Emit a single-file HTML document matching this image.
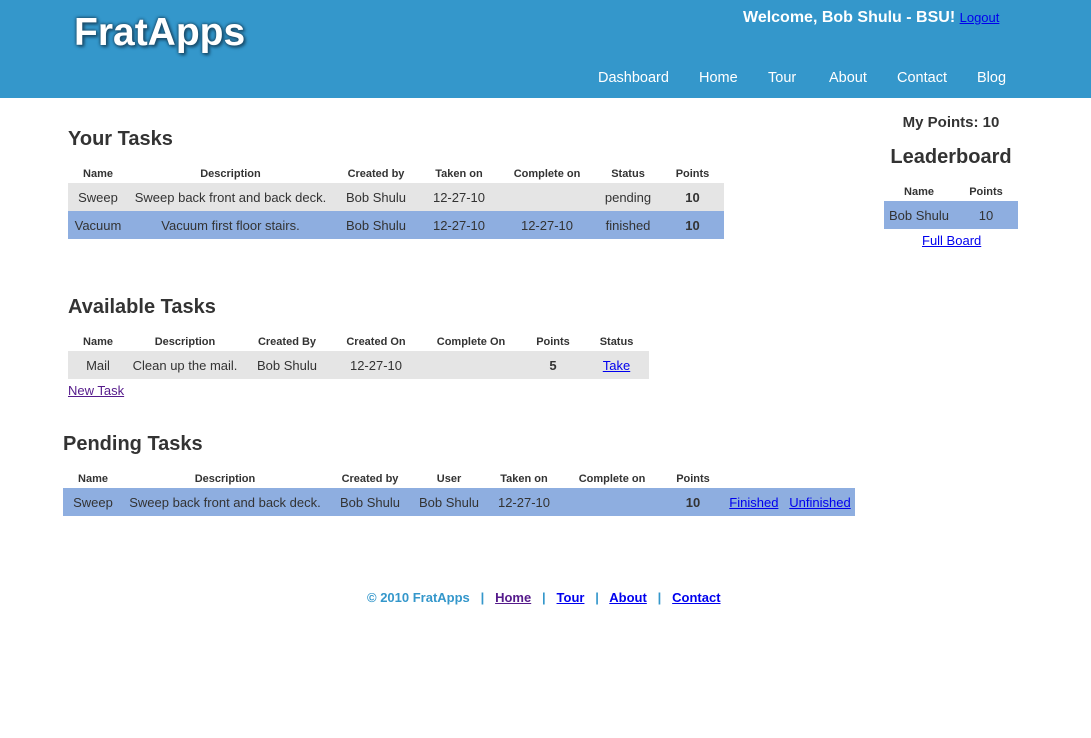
<!DOCTYPE html>
<html><head><meta charset="utf-8"><style>
*{margin:0;padding:0;box-sizing:border-box}
body{width:1091px;height:738px;background:#fff;font-family:"Liberation Sans",sans-serif;color:#333;position:relative;overflow:hidden}
.hdr{position:absolute;left:0;top:0;width:1091px;height:98px;background:#3497cb}
.logo{position:absolute;left:74px;top:11px;font-size:39px;font-weight:bold;color:#fff;text-shadow:0 0 3px #1b4f6e,0 0 3px #1b4f6e,2px 2px 3px #1b4f6e}
.welcome{position:absolute;left:743px;top:9px;color:#fff;font-size:16px;font-weight:bold}
.welcome a{font-size:13px;font-weight:normal;color:#00e}
.nav{position:absolute;top:70px;color:#fff;font-size:14.5px}
h2{position:absolute;font-size:20px;font-weight:bold;color:#333}
table{position:absolute;border-collapse:collapse;font-size:13px}
th{font-size:11px;font-weight:bold;height:18px;text-align:center;padding:0}
td{height:28px;text-align:center;padding:0}
.g td{background:#e5e5e5}.b td{background:#8eaee0}
a{color:#00e}
.ft{position:absolute;top:590px;font-size:13px;font-weight:bold}
</style></head><body>
<div class="hdr">
<div class="logo">FratApps</div>
<div class="welcome">Welcome, Bob Shulu - BSU! <a href="#">Logout</a></div>
<span class="nav" style="left:598px">Dashboard</span>
<span class="nav" style="left:699px">Home</span>
<span class="nav" style="left:768px">Tour</span>
<span class="nav" style="left:829px">About</span>
<span class="nav" style="left:897px">Contact</span>
<span class="nav" style="left:977px">Blog</span>
</div>

<h2 style="left:68px;top:128px">Your Tasks</h2>
<table style="left:68px;top:165px;width:656px">
<tr><th style="width:60px">Name</th><th style="width:205px">Description</th><th style="width:86px">Created by</th><th style="width:80px">Taken on</th><th style="width:96px">Complete on</th><th style="width:66px">Status</th><th style="width:63px">Points</th></tr>
<tr class="g"><td>Sweep</td><td>Sweep back front and back deck.</td><td>Bob Shulu</td><td>12-27-10</td><td></td><td>pending</td><td><b>10</b></td></tr>
<tr class="b"><td>Vacuum</td><td>Vacuum first floor stairs.</td><td>Bob Shulu</td><td>12-27-10</td><td>12-27-10</td><td>finished</td><td><b>10</b></td></tr>
</table>

<h2 style="left:68px;top:296px">Available Tasks</h2>
<table style="left:68px;top:333px;width:581px">
<tr><th style="width:60px">Name</th><th style="width:114px">Description</th><th style="width:90px">Created By</th><th style="width:88px">Created On</th><th style="width:102px">Complete On</th><th style="width:62px">Points</th><th style="width:65px">Status</th></tr>
<tr class="g"><td>Mail</td><td>Clean up the mail.</td><td>Bob Shulu</td><td>12-27-10</td><td></td><td><b>5</b></td><td><a href="#">Take</a></td></tr>
</table>
<a href="#" style="position:absolute;left:68px;top:383px;font-size:13px;color:#551a8b">New Task</a>

<h2 style="left:63px;top:433px">Pending Tasks</h2>
<table style="left:63px;top:470px;width:792px">
<tr><th style="width:60px">Name</th><th style="width:204px">Description</th><th style="width:86px">Created by</th><th style="width:72px">User</th><th style="width:78px">Taken on</th><th style="width:98px">Complete on</th><th style="width:64px">Points</th><th style="width:130px"></th></tr>
<tr class="b"><td>Sweep</td><td>Sweep back front and back deck.</td><td>Bob Shulu</td><td>Bob Shulu</td><td>12-27-10</td><td></td><td><b>10</b></td><td><a href="#">Finished</a>&nbsp;&nbsp; <a href="#">Unfinished</a></td></tr>
</table>

<div style="position:absolute;left:884px;width:134px;top:114px;text-align:center;font-size:15px;font-weight:bold">My Points: 10</div>
<div style="position:absolute;left:851px;width:200px;top:146px;text-align:center;font-size:20px;font-weight:bold">Leaderboard</div>
<table style="left:884px;top:183px;width:134px">
<tr><th style="width:70px">Name</th><th style="width:64px">Points</th></tr>
<tr class="b"><td>Bob Shulu</td><td>10</td></tr>
</table>
<a href="#" style="position:absolute;left:922px;top:233px;font-size:13px">Full Board</a>

<div class="ft" style="left:367px;color:#3497cb">© 2010 FratApps &nbsp;&nbsp;|&nbsp;&nbsp; <a href="#" style="color:#551a8b">Home</a> &nbsp;&nbsp;|&nbsp;&nbsp; <a href="#" style="color:#00e">Tour</a> &nbsp;&nbsp;|&nbsp;&nbsp; <a href="#">About</a> &nbsp;&nbsp;|&nbsp;&nbsp; <a href="#">Contact</a></div>
</body></html>
